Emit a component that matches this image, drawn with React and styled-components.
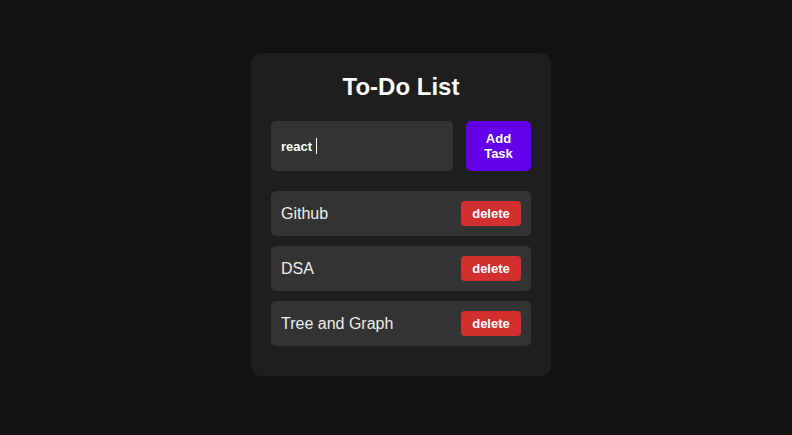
import React from 'react';
import styled, { createGlobalStyle } from 'styled-components';

const GlobalStyle = createGlobalStyle`
  html, body {
    margin: 0;
    padding: 0;
    background: #121212;
    font-family: "Liberation Sans", Arial, sans-serif;
  }
`;

const Page = styled.div`
  min-height: 435px;
  display: flex;
  justify-content: center;
  align-items: flex-start;
  padding: 53px 0 0 10px;
  box-sizing: border-box;
`;

const Card = styled.div`
  width: 300px;
  box-sizing: border-box;
  background: #1e1e1e;
  border-radius: 10px;
  padding: 20px 20px 20px;
  color: #fff;
`;

const Title = styled.h2`
  margin: 0 0 20px;
  text-align: center;
  font-size: 24px;
  line-height: 28px;
  font-weight: bold;
  color: #fff;
`;

const InputRow = styled.div`
  display: flex;
  gap: 13px;
  margin-bottom: 20px;
`;

const Field = styled.div`
  flex: 1;
  height: 50px;
  box-sizing: border-box;
  background: #333;
  border-radius: 5px;
  padding: 0 10px;
  display: flex;
  align-items: center;
  font-size: 13px;
  font-weight: bold;
  color: #fff;
`;

const Caret = styled.span`
  display: inline-block;
  width: 1px;
  height: 16px;
  background: #fff;
  margin-left: 4px;
`;

const AddButton = styled.button`
  width: 65px;
  height: 50px;
  border: none;
  border-radius: 5px;
  background: #6200ea;
  color: #fff;
  font-family: inherit;
  font-size: 13px;
  font-weight: bold;
  line-height: 15px;
  padding: 0 10px;
`;

const List = styled.ul`
  list-style: none;
  margin: 0;
  padding: 0;
`;

const Item = styled.li`
  display: flex;
  align-items: center;
  justify-content: space-between;
  height: 45px;
  box-sizing: border-box;
  padding: 0 10px;
  margin-bottom: 10px;
  background: #333;
  border-radius: 5px;
  font-size: 16px;
  color: #eee;
`;

const DeleteButton = styled.button`
  width: 60px;
  height: 25px;
  border: none;
  border-radius: 4px;
  background: #d32f2f;
  color: #fff;
  font-family: inherit;
  font-size: 13px;
  font-weight: bold;
  padding: 0;
`;

const tasks = ['Github', 'DSA', 'Tree and Graph'];

export default function App() {
  return (
    <>
      <GlobalStyle />
      <Page>
        <Card>
          <Title>To-Do List</Title>
          <InputRow>
            <Field>
              react
              <Caret />
            </Field>
            <AddButton>Add Task</AddButton>
          </InputRow>
          <List>
            {tasks.map(task => (
              <Item key={task}>
                <span>{task}</span>
                <DeleteButton>delete</DeleteButton>
              </Item>
            ))}
          </List>
        </Card>
      </Page>
    </>
  );
}
